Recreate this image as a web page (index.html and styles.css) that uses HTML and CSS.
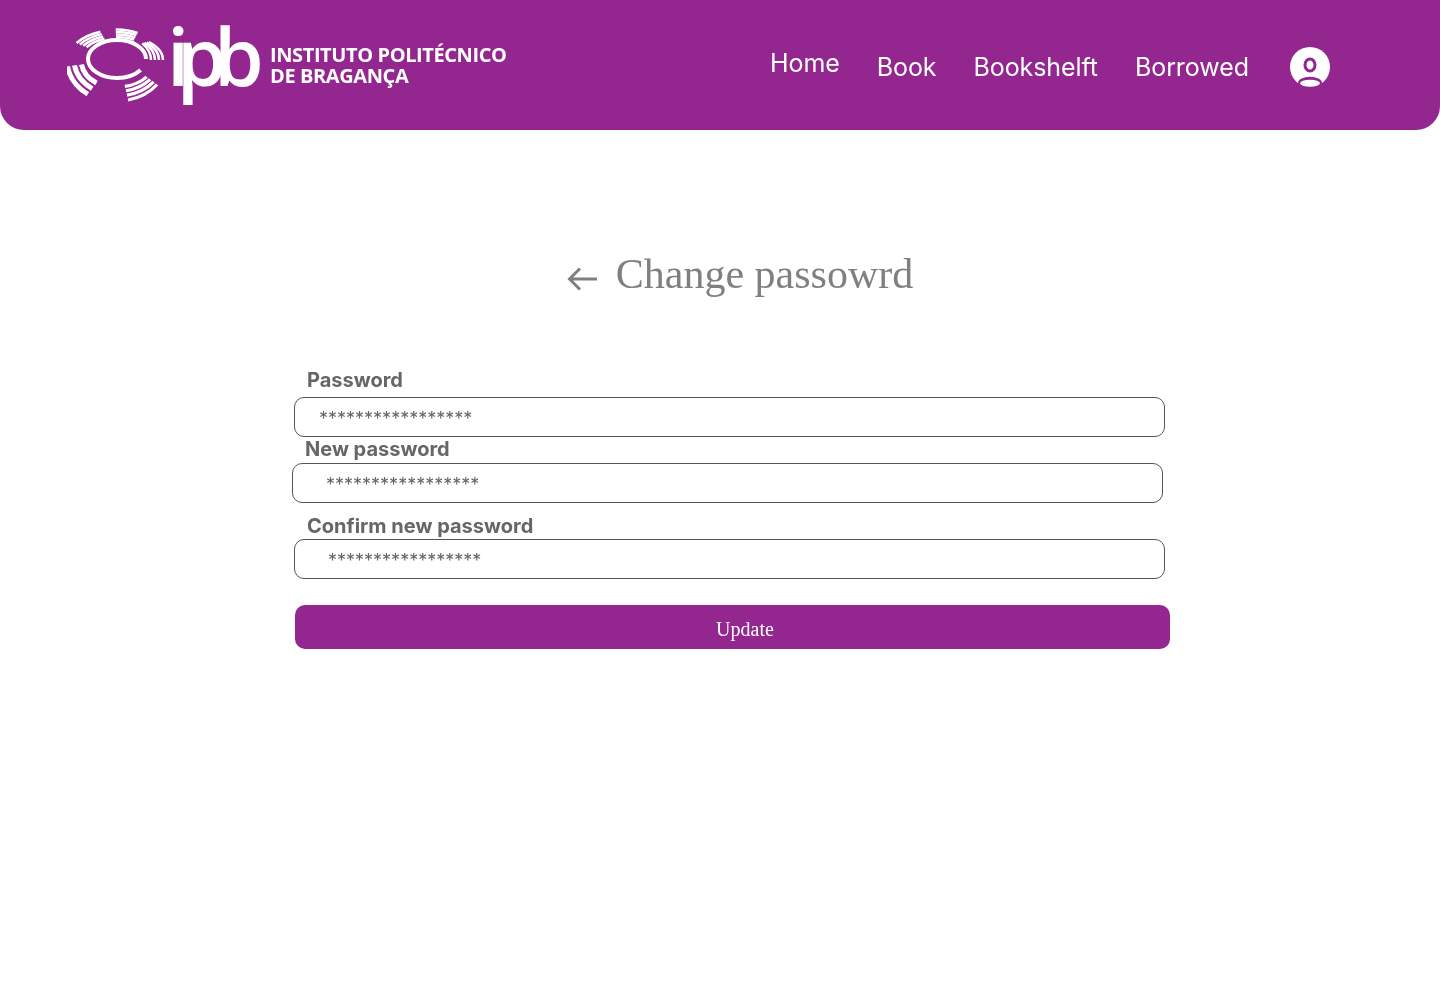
FILE: index.html
```html
<!DOCTYPE html>
<html lang="en">
<head>
<meta charset="utf-8">
<title>Change password</title>
<link rel="stylesheet" href="styles.css">
</head>
<body>
<header class="topbar">
  <div class="brand">
    <svg class="emblem" width="100" height="76" viewBox="66 28 100 76" fill="none" stroke="#fff" aria-hidden="true">
      <ellipse class="ring" cx="116" cy="59" rx="29" ry="19" pathLength="360" stroke-dasharray="335 360" stroke-dashoffset="-30"/>
      <g class="seg">
        <ellipse cx="116" cy="60" rx="37" ry="22.500" pathLength="360" stroke-dasharray="38 360" stroke-dashoffset="-208"/>
        <ellipse cx="116" cy="60" rx="41" ry="25" pathLength="360" stroke-dasharray="38 360" stroke-dashoffset="-208"/>
        <ellipse cx="116" cy="60" rx="45" ry="27.500" pathLength="360" stroke-dasharray="38 360" stroke-dashoffset="-208"/>
        <ellipse cx="116" cy="60" rx="49" ry="30" pathLength="360" stroke-dasharray="38 360" stroke-dashoffset="-208"/>
        <ellipse cx="116" cy="60" rx="38" ry="23" pathLength="360" stroke-dasharray="34 360" stroke-dashoffset="-268"/>
        <ellipse cx="116" cy="60" rx="40" ry="25.500" pathLength="360" stroke-dasharray="34 360" stroke-dashoffset="-268"/>
        <ellipse cx="116" cy="60" rx="42" ry="28" pathLength="360" stroke-dasharray="34 360" stroke-dashoffset="-268"/>
        <ellipse cx="116" cy="60" rx="44" ry="30.500" pathLength="360" stroke-dasharray="34 360" stroke-dashoffset="-268"/>
        <ellipse cx="116" cy="60" rx="34" ry="25" pathLength="360" stroke-dasharray="40 360" stroke-dashoffset="-322"/>
        <ellipse cx="116" cy="60" rx="38" ry="25" pathLength="360" stroke-dasharray="40 360" stroke-dashoffset="-322"/>
        <ellipse cx="116" cy="60" rx="42" ry="25" pathLength="360" stroke-dasharray="40 360" stroke-dashoffset="-322"/>
        <ellipse cx="116" cy="60" rx="46" ry="25" pathLength="360" stroke-dasharray="40 360" stroke-dashoffset="-322"/>
      </g>
      <g class="seg-thick">
        <ellipse cx="116" cy="60" rx="38" ry="27" pathLength="360" stroke-dasharray="42 360" stroke-dashoffset="-34"/>
        <ellipse cx="116" cy="60" rx="42" ry="31.500" pathLength="360" stroke-dasharray="42 360" stroke-dashoffset="-34"/>
        <ellipse cx="116" cy="60" rx="46" ry="36" pathLength="360" stroke-dasharray="42 360" stroke-dashoffset="-34"/>
        <ellipse cx="116" cy="60" rx="50" ry="41" pathLength="360" stroke-dasharray="42 360" stroke-dashoffset="-34"/>
      </g>
      <g class="seg-wide">
        <ellipse cx="116" cy="60" rx="36" ry="28" pathLength="360" stroke-dasharray="44 360" stroke-dashoffset="-128"/>
        <ellipse cx="116" cy="60" rx="43" ry="35" pathLength="360" stroke-dasharray="44 360" stroke-dashoffset="-128"/>
        <ellipse cx="116" cy="60" rx="50" ry="42" pathLength="360" stroke-dasharray="44 360" stroke-dashoffset="-128"/>
      </g>
    </svg>
    <span class="mark">ipb</span>
    <span class="school">INSTITUTO POLITÉCNICO<br>DE BRAGANÇA</span>
  </div>
  <nav class="menu">
    <a class="menu-link menu-home" href="#">Home</a>
    <a class="menu-link" href="#">Book</a>
    <a class="menu-link" href="#">Bookshelft</a>
    <a class="menu-link" href="#">Borrowed</a>
    <a class="avatar" href="#" aria-label="Profile">
      <svg width="40" height="40" viewBox="0 0 40 40">
        <circle cx="20" cy="20" r="20" fill="#fff"/>
        <ellipse cx="20" cy="18" rx="5" ry="6" fill="none" stroke="#93278f" stroke-width="3"/>
        <ellipse cx="20" cy="36" rx="12" ry="6.200" fill="#93278f"/>
        <ellipse cx="20" cy="36.300" rx="10" ry="3.500" fill="#fff"/>
      </svg>
    </a>
  </nav>
</header>

<main class="content">
  <h1 class="title">
    <svg class="back" width="30" height="26" viewBox="0 0 30 26" fill="none" stroke="#808080" stroke-width="3" aria-hidden="true">
      <path d="M30 13H3M13 2.500 2.500 13 13 23.500"/>
    </svg>
    <span class="title-text">Change passowrd</span>
  </h1>
  <form class="form">
    <label class="label label-first">Password</label>
    <div class="field field-first">*****************</div>
    <label class="label label-second">New password</label>
    <div class="field field-second">*****************</div>
    <label class="label label-third">Confirm new password</label>
    <div class="field field-third">*****************</div>
    <button class="submit" type="button">Update</button>
  </form>
</main>
</body>
</html>
```
FILE: styles.css
```css
* { box-sizing: border-box; }
html, body { margin: 0; background: #fff; }
body { font-family: Inter, "Liberation Sans", sans-serif; height: 995px; overflow: hidden; }

.topbar {
  height: 130px;
  background: #93278f;
  border-radius: 0 0 24px 24px;
  display: flex;
  align-items: center;
  padding: 0 110px 0 66px;
  justify-content: space-between;
}
.brand { display: flex; align-items: flex-start; height: 130px; will-change: transform; }
.emblem { margin: 28px 0 0 1px; flex: none; }
.ring { stroke-width: 4; }
.seg { stroke-width: 2.500; }
.seg-thick { stroke-width: 3.200; }
.seg-wide { stroke-width: 5; }
.mark {
  font-family: "Open Sans", sans-serif;
  font-size: 80px;
  font-weight: 600;
  line-height: 92px;
  letter-spacing: -12.500px;
  color: #fff;
  margin: 9px 0 0 0;
  width: 103px;
}
.school {
  font-family: "Open Sans", sans-serif;
  font-size: 20px;
  font-weight: 700;
  line-height: 21px;
  letter-spacing: -.4px;
  color: #fff;
  margin-top: 44px;
  white-space: nowrap;
}

.menu { display: flex; align-items: center; gap: 37px; margin-top: 4px; will-change: transform; }
.menu-link { font-size: 25px; line-height: 30px; font-weight: 400; letter-spacing: -.08px; color: #fff; text-decoration: none; }
.menu-home { margin-top: -8px; }
.avatar { display: block; height: 40px; margin-left: 4px; }

.content { padding-top: 120px; }
.title {
  margin: 0 0 70px;
  display: flex;
  justify-content: center;
  align-items: center;
  gap: 19px;
  font-family: "Liberation Serif", serif;
  font-size: 42px;
  line-height: 48px;
  font-weight: 400;
  color: #808080;
  padding-left: 40px;
  will-change: transform;
}
.back { margin-top: 10px; }

.form { margin-left: 294px; width: 876px; display: flex; flex-direction: column; align-items: flex-start; will-change: transform; }
.label { font-size: 20px; font-weight: 650; line-height: 24px; color: #666; }
.label-first { margin-left: 13px; }
.label-second { margin: 0 0 2px 11px; }
.label-third { margin: 11px 0 1px 13px; }
.field {
  width: 871px;
  height: 40px;
  border: 1px solid #555;
  border-radius: 10px;
  font-size: 18px;
  line-height: 41px;
  color: #666;
}
.field-first { margin-top: 5px; padding-left: 24px; }
.field-second { margin-left: -2px; padding-left: 33px; }
.field-third { padding-left: 33px; }
.submit {
  margin: 26px 0 0 1px;
  width: 875px;
  height: 44px;
  border: 0;
  border-radius: 10px;
  background: #93278f;
  color: #fff;
  font-family: "Liberation Serif", serif;
  font-size: 20px;
  padding: 4px 0 0 25px;
}
```
